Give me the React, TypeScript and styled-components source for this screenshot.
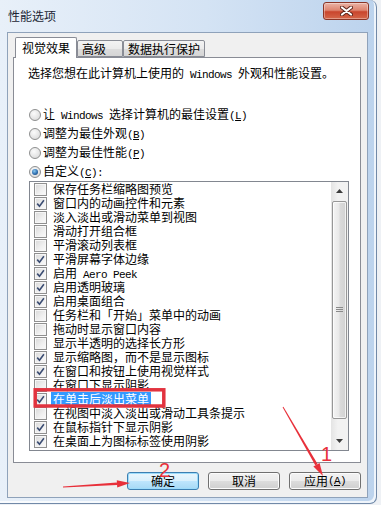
import styled, { createGlobalStyle } from "styled-components";

const GlobalStyle = createGlobalStyle`
  html, body {
    margin: 0;
    padding: 0;
    background: #eef1f5;
  }
  * {
    box-sizing: border-box;
  }
  body {
    font-family: "Noto Sans CJK SC", "Noto Sans", sans-serif;
    font-size: 12px;
    color: #000;
  }
`;

const Window = styled.div`
  position: relative;
  width: 377px;
  height: 504px;
  display: flex;
  flex-direction: column;
  background: linear-gradient(to right, #e8f0f9 0%, #d4e3f4 55%, #bcd3ed 100%);
  border-right: 1px solid #7189a8;
  border-bottom: 1px solid #7189a8;
  border-radius: 0 7px 7px 0;
  box-shadow: inset -2px -2px 0 rgba(255, 255, 255, 0.75);
`;

const TitleBar = styled.div`
  height: 32px;
  flex: none;
  display: flex;
  justify-content: space-between;
  align-items: flex-start;
  padding: 2px 7px 0 8px;
`;

const Title = styled.span`
  margin-top: 7px;
  line-height: 14px;
  color: #1b2533;
`;

const CloseButton = styled.div`
  width: 46px;
  height: 18px;
  display: flex;
  align-items: center;
  justify-content: center;
  border: 1px solid #8a3527;
  border-radius: 3px;
  background: linear-gradient(#eab3a6 0%, #de8570 45%, #c9452d 55%, #d5674a 100%);
  box-shadow: inset 0 0 0 1px rgba(255, 255, 255, 0.35);
`;

const Client = styled.div`
  flex: 1;
  margin: 0 8px 5px 7px;
  border: 1px solid #8fa2ba;
  background: #f0f0f0;
  padding: 4px 6px 0 5px;
  display: flex;
  flex-direction: column;
`;

const TabStrip = styled.div`
  height: 20px;
  display: flex;
  align-items: flex-end;
  padding-left: 2px;
`;

const Tab = styled.div<{ $active?: boolean; $w: number; $pad: number }>`
  position: relative;
  width: ${(p) => p.$w}px;
  height: ${(p) => (p.$active ? 21 : 17)}px;
  margin-bottom: ${(p) => (p.$active ? -1 : 0)}px;
  padding: ${(p) => (p.$active ? 3 : 1)}px 0 0 ${(p) => p.$pad}px;
  line-height: 14px;
  border: 1px solid #898c95;
  border-bottom: ${(p) => (p.$active ? "none" : "1px solid #898c95")};
  border-radius: 2px 2px 0 0;
  background: ${(p) =>
    p.$active
      ? "#ffffff"
      : "linear-gradient(#f3f3f3 0%, #ebebeb 50%, #dddddd 51%, #d5d5d5 100%)"};
  white-space: nowrap;
`;

const Panel = styled.div`
  height: 406px;
  flex: none;
  border: 1px solid #898c95;
  background: #ffffff;
  padding: 8px 11px 0 15px;
  display: flex;
  flex-direction: column;
`;

const Description = styled.div`
  line-height: 14px;
  margin-left: -1px;
  white-space: nowrap;
`;

const RadioGroup = styled.div`
  margin-top: 23px;
  display: flex;
  flex-direction: column;
`;

const RadioRow = styled.div`
  height: 19px;
  display: flex;
  align-items: center;
  gap: 2px;
  line-height: 14px;
  white-space: nowrap;
`;

const Radio = styled.span<{ $on?: boolean }>`
  width: 12px;
  height: 12px;
  flex: none;
  border-radius: 50%;
  border: 1px solid #8e8f8f;
  background: radial-gradient(circle at 40% 35%, #fbfbfb 0%, #e6e6e6 55%, #d2d2d2 100%);
  display: flex;
  align-items: center;
  justify-content: center;
  &::after {
    content: "";
    display: ${(p) => (p.$on ? "block" : "none")};
    width: 6px;
    height: 6px;
    border-radius: 50%;
    background: radial-gradient(circle at 40% 35%, #8ccaf0 0%, #2e6eb0 55%, #123760 100%);
  }
`;

const ListBox = styled.div`
  width: 320px;
  height: 270px;
  border: 1px solid #828790;
  background: #ffffff;
  display: flex;
`;

const Items = styled.div`
  flex: 1;
  display: flex;
  flex-direction: column;
`;

const Item = styled.div`
  height: 14px;
  flex: none;
  display: flex;
  align-items: center;
  padding-left: 4px;
  line-height: 14px;
  white-space: nowrap;
`;

const Box = styled.span`
  width: 13px;
  height: 13px;
  flex: none;
  border: 1px solid #8f8f8f;
  background: linear-gradient(135deg, #d9d9d9 0%, #f0f0f0 60%, #fbfbfb 100%);
  box-shadow: inset 0 0 0 1px #f6f6f6;
  display: flex;
  align-items: center;
  justify-content: center;
`;

const Label = styled.span<{ $selected?: boolean }>`
  margin-left: 4px;
  padding: 0 2px;
  height: 14px;
  background: ${(p) => (p.$selected ? "#3399ff" : "transparent")};
  color: ${(p) => (p.$selected ? "#ffffff" : "#000000")};
`;

const ScrollBar = styled.div`
  width: 17px;
  flex: none;
  display: flex;
  flex-direction: column;
  background: linear-gradient(to right, #e4e4e4, #f2f2f2 40%, #f2f2f2);
`;

const ArrowButton = styled.div`
  height: 17px;
  flex: none;
  display: flex;
  align-items: center;
  justify-content: center;
`;

const Thumb = styled.div`
  height: 218px;
  margin: 2px 1px 13px 1px;
  border: 1px solid #979797;
  border-radius: 2px;
  background: linear-gradient(to right, #f4f4f4 0%, #e9e9e9 45%, #dadada 55%, #d2d2d2 100%);
  box-shadow: inset 0 0 0 1px rgba(255, 255, 255, 0.7);
  display: flex;
  align-items: center;
  justify-content: center;
`;

const ButtonRow = styled.div`
  margin-top: 9px;
  display: flex;
  justify-content: flex-end;
  gap: 9px;
`;

const Button = styled.div<{ $default?: boolean }>`
  width: 72px;
  height: 18px;
  display: flex;
  align-items: center;
  justify-content: center;
  line-height: 14px;
  border-radius: 3px;
  border: 1px solid ${(p) => (p.$default ? "#3c7fb1" : "#707070")};
  background: ${(p) =>
    p.$default
      ? "linear-gradient(#eaf6fd 0%, #d9f0fc 50%, #bee6fd 51%, #a7d9f5 100%)"
      : "linear-gradient(#f2f2f2 0%, #ebebeb 50%, #dddddd 51%, #cfcfcf 100%)"};
  box-shadow: inset 0 0 0 1px ${(p) => (p.$default ? "#9ddcfb" : "#fcfcfc")};
`;

const Latin = styled.span`
  font-family: "Liberation Mono", "DejaVu Sans Mono", monospace;
  font-size: 11px;
  letter-spacing: -0.6px;
  white-space: pre;
`;

const Key = styled.span`
  text-decoration: underline;
`;

const Annotations = styled.svg`
  position: absolute;
  left: 0;
  top: 0;
  width: 381px;
  height: 505px;
  pointer-events: none;
  overflow: visible;
`;

// latin runs go into a mono font, the rest stays cjk
function mixed(text: string) {
  return text
    .split(/( ?[A-Za-z]+(?: [A-Za-z]+)* ?)/)
    .map((part, i) => (i % 2 === 1 ? <Latin key={i}>{part}</Latin> : part));
}

function hotkey(k: string) {
  return (
    <Latin>
      (<Key>{k}</Key>)
    </Latin>
  );
}

// tapered arrow shaft + head, returns two polygons
function arrow(ax: number, ay: number, tx: number, ty: number) {
  const len = Math.hypot(tx - ax, ty - ay);
  const ux = (tx - ax) / len;
  const uy = (ty - ay) / len;
  const px = -uy;
  const py = ux;
  const bx = tx - ux * 13;
  const by = ty - uy * 13;
  const pt = (x: number, y: number) => `${x.toFixed(1)},${y.toFixed(1)}`;
  const shaft = [
    pt(ax + px * 0.5, ay + py * 0.5),
    pt(bx + px * 1.3, by + py * 1.3),
    pt(bx - px * 1.3, by - py * 1.3),
    pt(ax - px * 0.5, ay - py * 0.5),
  ].join(" ");
  const head = [
    pt(tx, ty),
    pt(bx + px * 3.6, by + py * 3.6),
    pt(bx - px * 3.6, by - py * 3.6),
  ].join(" ");
  return { shaft, head };
}

const effects: { text: string; on: boolean; selected?: boolean }[] = [
  { text: "保存任务栏缩略图预览", on: false },
  { text: "窗口内的动画控件和元素", on: true },
  { text: "淡入淡出或滑动菜单到视图", on: false },
  { text: "滑动打开组合框", on: false },
  { text: "平滑滚动列表框", on: false },
  { text: "平滑屏幕字体边缘", on: true },
  { text: "启用 Aero Peek", on: true },
  { text: "启用透明玻璃", on: true },
  { text: "启用桌面组合", on: true },
  { text: "任务栏和「开始」菜单中的动画", on: false },
  { text: "拖动时显示窗口内容", on: false },
  { text: "显示半透明的选择长方形", on: false },
  { text: "显示缩略图，而不是显示图标", on: true },
  { text: "在窗口和按钮上使用视觉样式", on: true },
  { text: "在窗口下显示阴影", on: false },
  { text: "在单击后淡出菜单", on: true, selected: true },
  { text: "在视图中淡入淡出或滑动工具条提示", on: false },
  { text: "在鼠标指针下显示阴影", on: true },
  { text: "在桌面上为图标标签使用阴影", on: true },
];

export default function App() {
  const a1 = arrow(283, 407, 323, 476);
  const a2 = arrow(63, 487, 130, 483);
  return (
    <>
      <GlobalStyle />
      <Window>
        <TitleBar>
          <Title>性能选项</Title>
          <CloseButton>
            <svg width="13" height="10" viewBox="0 0 13 10">
              <path d="M2 1.5 L11 8.5 M11 1.5 L2 8.5" stroke="#5b241a" strokeWidth="4" strokeLinecap="round" />
              <path d="M2 1.5 L11 8.5 M11 1.5 L2 8.5" stroke="#ffffff" strokeWidth="2.2" strokeLinecap="round" />
            </svg>
          </CloseButton>
        </TitleBar>
        <Client>
          <TabStrip>
            <Tab $active $w={62} $pad={6}>视觉效果</Tab>
            <Tab $w={46} $pad={4}>高级</Tab>
            <Tab $w={82} $pad={4}>数据执行保护</Tab>
          </TabStrip>
          <Panel>
            <Description>{mixed("选择您想在此计算机上使用的 Windows 外观和性能设置。")}</Description>
            <RadioGroup>
              <RadioRow>
                <Radio />
                <span>
                  {mixed("让 Windows 选择计算机的最佳设置")}
                  {hotkey("L")}
                </span>
              </RadioRow>
              <RadioRow>
                <Radio />
                <span>
                  调整为最佳外观{hotkey("B")}
                </span>
              </RadioRow>
              <RadioRow>
                <Radio />
                <span>
                  调整为最佳性能{hotkey("P")}
                </span>
              </RadioRow>
              <RadioRow>
                <Radio $on />
                <span>
                  自定义{hotkey("C")}
                  <Latin>:</Latin>
                </span>
              </RadioRow>
            </RadioGroup>
            <ListBox>
              <Items>
                {effects.map((e) => (
                  <Item key={e.text}>
                    <Box>
                      {e.on && (
                        <svg width="9" height="9" viewBox="0 0 9 9">
                          <path d="M1.2 4.6 L3.5 7.2 L7.9 1.2" fill="none" stroke="#3b4d73" strokeWidth="1.6" />
                        </svg>
                      )}
                    </Box>
                    <Label $selected={e.selected}>{mixed(e.text)}</Label>
                  </Item>
                ))}
              </Items>
              <ScrollBar>
                <ArrowButton>
                  <svg width="7" height="4" viewBox="0 0 7 4">
                    <path d="M0 4 L3.5 0 L7 4 Z" fill="#3c3c3c" />
                  </svg>
                </ArrowButton>
                <Thumb>
                  <svg width="7" height="6" viewBox="0 0 7 6">
                    <path d="M0 0.5 H7 M0 2.5 H7 M0 4.5 H7" stroke="#8a8a8a" strokeWidth="1" />
                  </svg>
                </Thumb>
                <ArrowButton>
                  <svg width="7" height="4" viewBox="0 0 7 4">
                    <path d="M0 0 L3.5 4 L7 0 Z" fill="#3c3c3c" />
                  </svg>
                </ArrowButton>
              </ScrollBar>
            </ListBox>
          </Panel>
          <ButtonRow>
            <Button $default>确定</Button>
            <Button>取消</Button>
            <Button>
              应用{hotkey("A")}
            </Button>
          </ButtonRow>
        </Client>
        <Annotations viewBox="0 0 381 505">
          <rect x="35.2" y="389.8" width="128.6" height="16.2" fill="none" stroke="#e2333f" strokeWidth="3.5" />
          <polygon points={a1.shaft} fill="#e8303a" />
          <polygon points={a1.head} fill="#e8303a" />
          <polygon points={a2.shaft} fill="#e8303a" />
          <polygon points={a2.head} fill="#e8303a" />
          <text x="321" y="461" fill="#e8303a" fontSize="20" fontFamily="Liberation Sans, sans-serif">
            1
          </text>
          <text x="159" y="477" fill="#e8303a" fontSize="20" fontFamily="Liberation Sans, sans-serif">
            2
          </text>
        </Annotations>
      </Window>
    </>
  );
}
